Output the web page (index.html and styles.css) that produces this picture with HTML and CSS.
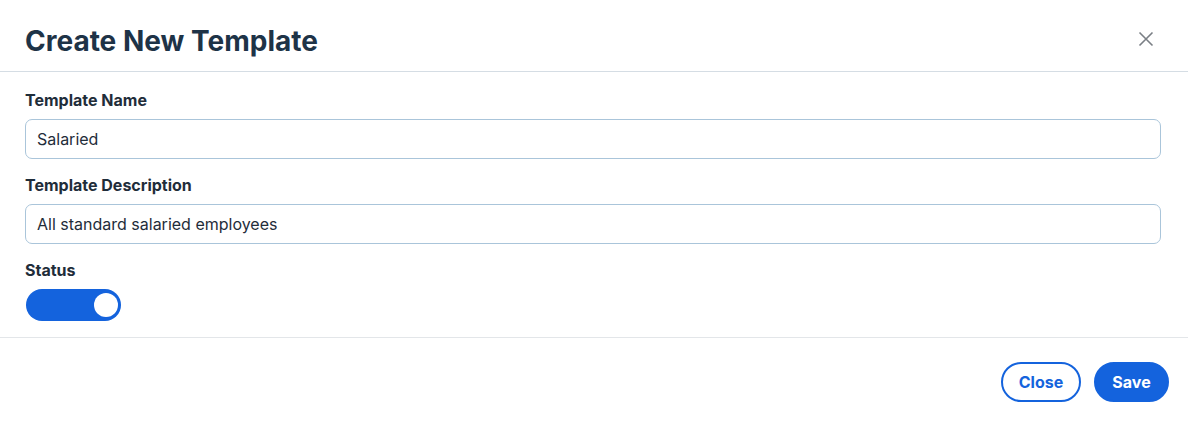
FILE: index.html
```html
<!DOCTYPE html>
<html lang="en">
<head>
  <meta charset="UTF-8" />
  <meta name="viewport" content="width=device-width, initial-scale=1" />
  <title>Create New Template</title>
  <link rel="stylesheet" href="styles.css">
</head>
<body>
  <div class="modal">
    <div class="modal-header">
      <h2 class="modal-title">Create New Template</h2>
      <button class="modal-close" aria-label="Close">
        <svg width="16" height="16" viewBox="0 0 16 16">
          <path d="M1.5 1.5 L14.5 14.5 M14.5 1.5 L1.5 14.5" stroke="currentColor" stroke-width="1.6" fill="none" />
        </svg>
      </button>
    </div>

    <div class="modal-body">
      <div class="field">
        <label for="templateName">Template Name</label>
        <input type="text" id="templateName" value="Salaried" />
      </div>
      <div class="field">
        <label for="templateDesc">Template Description</label>
        <input type="text" id="templateDesc" value="All standard salaried employees" />
      </div>
      <div class="field">
        <label>Status</label>
        <div class="toggle on"><span class="knob"></span></div>
      </div>
    </div>

    <div class="modal-footer">
      <button class="btn btn-outline">Close</button>
      <button class="btn btn-primary">Save</button>
    </div>
  </div>
</body>
</html>
```

FILE: styles.css
```css
* { box-sizing: border-box; }
body {
  font-family: Inter, "Noto Sans", sans-serif;
  margin: 0;
  padding: 0;
  background-color: #fff;
  color: #1e3246;
}
.modal {
  width: 1188px;
  background: #fff;
}
.modal-header {
  display: flex;
  align-items: center;
  justify-content: space-between;
  height: 72px;
  padding: 0 34px 0 25px;
  border-bottom: 1px solid #d5dde4;
}
.modal-title {
  margin: 0;
  font-size: 28px;
  font-weight: 700;
  color: #1e3347;
  padding-top: 10px;
}
.modal-close {
  background: none;
  border: none;
  padding: 0;
  color: #7a7f85;
  cursor: pointer;
  display: flex;
  margin-top: 6px;
}
.modal-body {
  padding: 18px 27px 16px 25px;
  border-bottom: 1px solid #e3e6e9;
}
.field {
  display: flex;
  flex-direction: column;
  gap: 9px;
  margin-bottom: 16px;
}
.field:last-child { margin-bottom: 0; }
.field label {
  font-size: 16px;
  font-weight: 700;
  color: #1f2d3a;
}
.field input {
  font-family: inherit;
  font-size: 16px;
  color: #1f2d3a;
  height: 40px;
  padding: 0 11px;
  border: 1px solid #aac5da;
  border-radius: 7px;
  outline: none;
}
.toggle {
  width: 95px;
  height: 32px;
  border-radius: 16px;
  background: #1463dd;
  display: flex;
  align-items: center;
  justify-content: flex-end;
  padding: 0 3px;
  margin-left: 1px;
}
.knob {
  width: 24px;
  height: 24px;
  border-radius: 50%;
  background: #fff;
}
.modal-footer {
  display: flex;
  justify-content: flex-end;
  gap: 13px;
  padding: 24px 19px 24px 25px;
}
.btn {
  font-family: inherit;
  font-size: 16px;
  font-weight: 700;
  height: 40px;
  border-radius: 20px;
  border: 2px solid #1463dd;
  cursor: pointer;
}
.btn-outline {
  background: #fff;
  color: #1463dd;
  width: 80px;
}
.btn-primary {
  background: #1463dd;
  color: #fff;
  width: 75px;
}
```
